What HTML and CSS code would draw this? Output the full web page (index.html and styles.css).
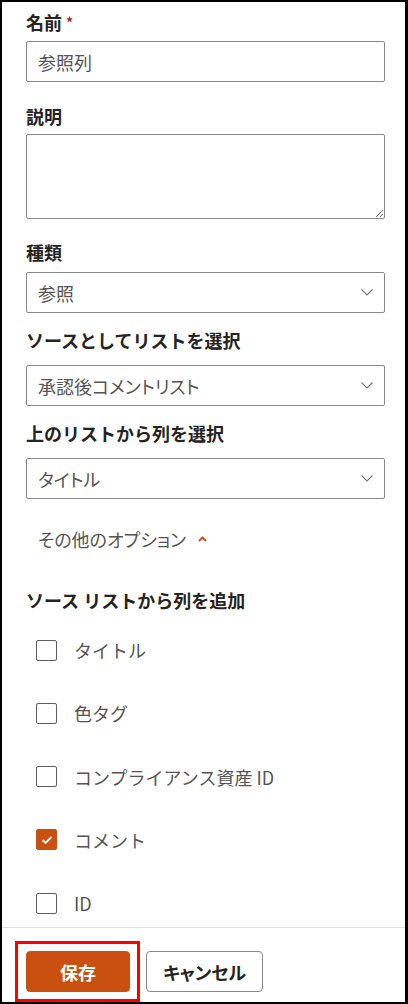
FILE: index.html
```html
<!DOCTYPE html>
<html lang="ja">
<head>
  <meta charset="utf-8">
  <title>列の作成</title>
  <meta name="viewport" content="width=device-width, initial-scale=1">
  <link rel="stylesheet" href="styles.css">
</head>
<body>
  <div class="panel">
    <main class="content">
      <div class="field first">
        <label class="label">名前 <span class="required">*</span></label>
        <input class="textbox" type="text" value="参照列">
      </div>

      <div class="field desc">
        <label class="label">説明</label>
        <textarea class="textbox multiline"></textarea>
      </div>

      <div class="field kind">
        <label class="label">種類</label>
        <div class="dropdown">
          <span>参照</span>
          <svg class="chevron" width="12" height="7" viewBox="0 0 12 7"><path d="M0.5 0.5 L6 6 L11.5 0.5" fill="none" stroke="#777" stroke-width="1.1"/></svg>
        </div>
      </div>

      <div class="field">
        <label class="label">ソースとしてリストを選択</label>
        <div class="dropdown">
          <span>承認後コメントリスト</span>
          <svg class="chevron" width="12" height="7" viewBox="0 0 12 7"><path d="M0.5 0.5 L6 6 L11.5 0.5" fill="none" stroke="#777" stroke-width="1.1"/></svg>
        </div>
      </div>

      <div class="field">
        <label class="label">上のリストから列を選択</label>
        <div class="dropdown">
          <span>タイトル</span>
          <svg class="chevron" width="12" height="7" viewBox="0 0 12 7"><path d="M0.5 0.5 L6 6 L11.5 0.5" fill="none" stroke="#777" stroke-width="1.1"/></svg>
        </div>
      </div>

      <button class="more">その他のオプション
        <svg width="9" height="6" viewBox="0 0 9 6"><path d="M1 5 L4.5 1.5 L8 5" fill="none" stroke="#ca5010" stroke-width="1.8"/></svg>
      </button>

      <h3 class="label section">ソース リストから列を追加</h3>

      <ul class="checks">
        <li><span class="box"></span>タイトル</li>
        <li><span class="box"></span>色タグ</li>
        <li><span class="box"></span>コンプライアンス資産 ID</li>
        <li><span class="box checked"><svg width="12" height="10" viewBox="0 0 12 10"><path d="M1.5 5 L4.5 8 L10.5 2" fill="none" stroke="#fff" stroke-width="1.8"/></svg></span>コメント</li>
        <li><span class="box"></span>ID</li>
      </ul>
    </main>

    <footer class="footer">
      <span class="highlight"><button class="btn primary">保存</button></span>
      <button class="btn">キャンセル</button>
    </footer>
  </div>
</body>
</html>
```

FILE: styles.css
```css
* {
  margin: 0;
  padding: 0;
  box-sizing: border-box;
}

:root {
  --orange: #ca5010;
  --text: #252423;
  --value: #555453;
  --border: #8a8886;
  --divider: #e1dfdd;
}

body {
  font-family: "Noto Sans CJK JP", "Noto Sans", sans-serif;
  color: var(--text);
  background: #fff;
}

.panel {
  width: 408px;
  height: 1004px;
  border: 2px solid #000;
  border-right-width: 3px;
  overflow: hidden;
  display: flex;
  flex-direction: column;
}

.content {
  flex: 1;
  padding: 8px 20px 0 24px;
}

.label {
  display: block;
  font-size: 18px;
  line-height: 24px;
  font-weight: 700;
  color: var(--text);
}

.required {
  color: #a4262c;
  font-size: 14px;
  vertical-align: top;
}

.field .label {
  margin-bottom: 13px;
}

.field + .field {
  margin-top: 15px;
}

.field.first .label {
  margin-bottom: 7px;
}

.field.desc {
  margin-top: 22px;
}

.field.desc .label {
  margin-bottom: 6px;
}

.field.kind {
  margin-top: 21px;
}

.field.kind .label {
  margin-bottom: 8px;
}

.textbox,
.dropdown {
  display: flex;
  align-items: center;
  width: 100%;
  height: 41px;
  border: 1px solid var(--border);
  border-radius: 2px;
  padding: 0 11px;
  font: inherit;
  font-size: 18px;
  color: var(--value);
  font-feature-settings: "palt";
  background: #fff;
  outline: none;
}

.dropdown {
  justify-content: space-between;
}

.multiline {
  display: block;
  height: 85px;
  resize: vertical;
}

.chevron {
  flex: none;
}

.more {
  display: flex;
  align-items: center;
  gap: 12px;
  margin: 28px 0 0 12px;
  border: none;
  background: none;
  font: inherit;
  font-size: 18px;
  line-height: 24px;
  color: var(--value);
  font-feature-settings: "palt";
}

.section {
  margin-top: 37px;
}

.checks {
  list-style: none;
  margin-top: 18px;
  display: flex;
  flex-direction: column;
  gap: 23.25px;
}

.checks li {
  display: flex;
  align-items: center;
  height: 40px;
  padding-left: 10px;
  font-size: 18px;
  color: var(--value);
}

.box {
  flex: none;
  display: flex;
  align-items: center;
  justify-content: center;
  width: 21px;
  height: 21px;
  border: 1px solid #605e5c;
  border-radius: 2px;
  margin-right: 17px;
}

.box.checked {
  background: var(--orange);
  border-color: var(--orange);
}

.footer {
  border-top: 1px solid var(--divider);
  padding: 13px 0 0 13px;
  display: flex;
  align-items: center;
  gap: 6px;
}

/* red annotation frame round the save button */
.highlight {
  display: flex;
  border: 3px solid #f00;
  padding: 7px 7px 7px 8px;
}

.btn {
  height: 41px;
  width: 117px;
  border: 1px solid var(--border);
  border-radius: 4px;
  background: #fff;
  font: inherit;
  font-size: 18px;
  font-weight: 700;
  color: var(--text);
  font-feature-settings: "palt";
}

.btn.primary {
  width: 104px;
  background: var(--orange);
  border-color: var(--orange);
  color: #fff;
}
```
